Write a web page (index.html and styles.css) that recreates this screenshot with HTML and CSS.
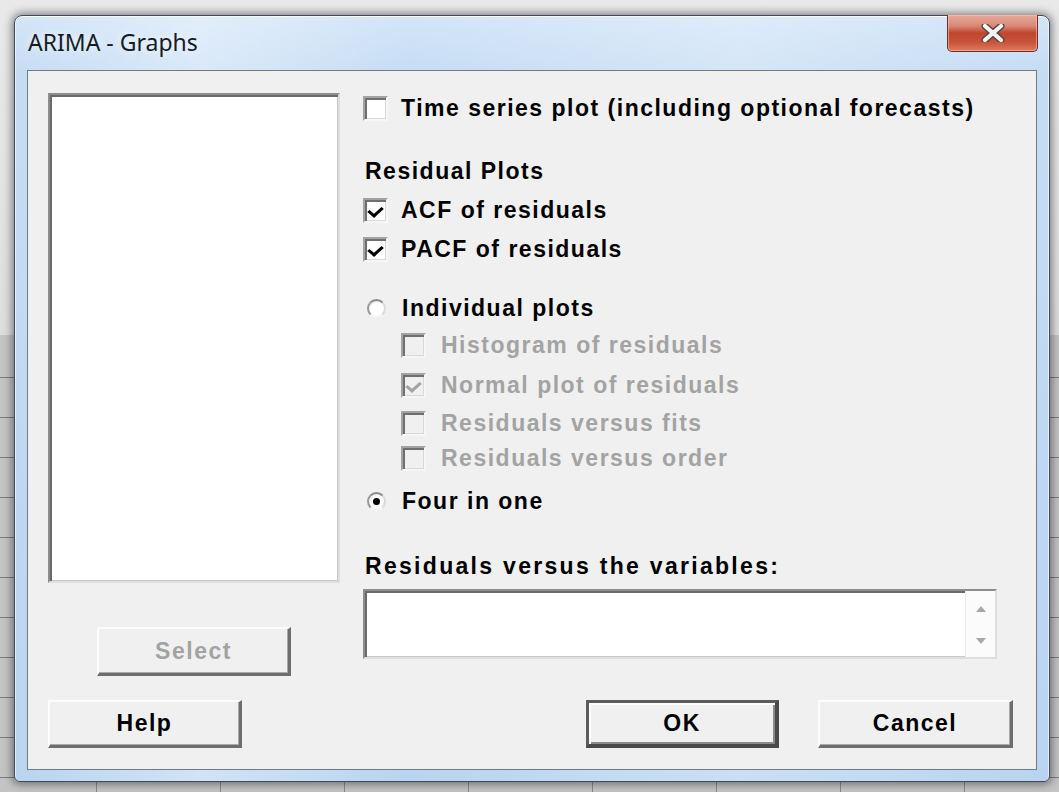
FILE: index.html
```html
<!DOCTYPE html>
<html lang="en">
<head>
<meta charset="utf-8">
<title>ARIMA - Graphs</title>
<link rel="stylesheet" href="styles.css">
</head>
<body>
<div class="desk">
  <div class="window">
    <div class="titlebar">
      <span class="title">ARIMA - Graphs</span>
      <button class="close" aria-label="Close">
        <svg width="24" height="18" viewBox="0 0 24 18">
          <path d="M4 2 L20 16 M20 2 L4 16" stroke="#5a4644" stroke-width="7" stroke-linecap="round" fill="none"/>
          <path d="M4 2 L20 16 M20 2 L4 16" stroke="#f4f4f4" stroke-width="4.2" stroke-linecap="round" fill="none"/>
        </svg>
      </button>
    </div>
    <div class="client">
      <div class="main">
        <div class="left">
          <div class="listbox"></div>
          <button class="btn select" disabled>Select</button>
        </div>
        <div class="right">
          <div class="opt time"><span class="check"></span><span class="label">Time series plot (including optional forecasts)</span></div>
          <div class="heading">Residual Plots</div>
          <div class="opt acf"><span class="check on"></span><span class="label">ACF of residuals</span></div>
          <div class="opt pacf"><span class="check on"></span><span class="label">PACF of residuals</span></div>
          <div class="opt indiv"><span class="radio"></span><span class="label">Individual plots</span></div>
          <div class="opt sub hist"><span class="check off"></span><span class="label dim">Histogram of residuals</span></div>
          <div class="opt sub normal"><span class="check on off"></span><span class="label dim">Normal plot of residuals</span></div>
          <div class="opt sub fits"><span class="check off"></span><span class="label dim">Residuals versus fits</span></div>
          <div class="opt sub order"><span class="check off"></span><span class="label dim">Residuals versus order</span></div>
          <div class="opt four"><span class="radio on"></span><span class="label">Four in one</span></div>
          <div class="heading vars">Residuals versus the variables:</div>
          <div class="textbox">
            <div class="field"></div>
            <div class="scroll">
              <span class="arrow up"></span>
              <span class="arrow down"></span>
            </div>
          </div>
        </div>
      </div>
      <div class="actions">
        <button class="btn help">Help</button>
        <button class="btn ok">OK</button>
        <button class="btn cancel">Cancel</button>
      </div>
    </div>
  </div>
</div>
</body>
</html>
```

FILE: styles.css
```css
* { box-sizing: border-box; }

html, body {
  margin: 0;
  padding: 0;
  width: 1059px;
  height: 792px;
  overflow: hidden;
}

/* desktop behind the dialog: a faded worksheet grid */
.desk {
  width: 1059px;
  height: 792px;
  padding: 15px 0 0 14px;
  background-color: #c4c4c4;
  background-image:
    linear-gradient(#e9e9e9, #dedede),
    repeating-linear-gradient(to bottom, transparent 0 39px, #7c7c7c 39px 40px),
    repeating-linear-gradient(to right, transparent 0 96px, #8c8c8c 96px 97px, transparent 97px 124px);
  background-size: 100% 335px, 100% 100%, 100% 100%;
  background-position: 0 0, 0 338px, 0 0;
  background-repeat: no-repeat, repeat, repeat;
}

.window {
  width: 1036px;
  height: 767px;
  border: 1px solid #3d4b5c;
  border-radius: 8px 8px 6px 6px;
  padding: 0 12px 11px 12px;
  background:
    linear-gradient(to right, rgba(255,255,255,0) 0, rgba(255,255,255,0.35) 18%, rgba(255,255,255,0) 38%, rgba(255,255,255,0.25) 70%, rgba(255,255,255,0) 100%),
    linear-gradient(to bottom, #d3e5f8 0, #c5dcf4 8%, #b9d4f0 100%);
  box-shadow: 0 0 9px 2px rgba(0,0,0,0.45), inset 0 1px 0 rgba(255,255,255,0.8), inset 1px 0 0 rgba(255,255,255,0.6), inset -1px 0 0 rgba(255,255,255,0.6);
  display: flex;
  flex-direction: column;
}

.titlebar {
  height: 54px;
  display: flex;
  align-items: flex-start;
}

.title {
  font-family: "Noto Sans", "Open Sans", sans-serif;
  font-size: 23px;
  line-height: 23px;
  color: #141c28;
  margin: 15px 0 0 1px;
  text-shadow: 0 0 8px rgba(255,255,255,0.9);
}

.close {
  margin: -1px -1px 0 auto;
  width: 91px;
  height: 37px;
  border: 1px solid #6c2e25;
  border-top: none;
  border-radius: 0 0 5px 5px;
  background: linear-gradient(to bottom, #e9a899 0, #d98a77 30%, #c1452d 50%, #c8523a 75%, #de7c5c 100%);
  box-shadow: inset 0 0 0 1px rgba(255,200,190,0.55);
  display: flex;
  align-items: center;
  justify-content: center;
  padding: 0;
}

.client {
  flex: 1;
  border: 1px solid #6e7a87;
  background: #f0f0f0;
  padding: 22px 23px 0 20px;
  font-family: "Liberation Sans", Arial, sans-serif;
  font-weight: bold;
  font-size: 23px;
  letter-spacing: 1.5px;
  color: #000;
}

.main {
  display: flex;
  gap: 23px;
}

.left {
  width: 292px;
  display: flex;
  flex-direction: column;
}

/* sunken 3-D frame shared by the list and the entry field */
.listbox, .textbox {
  background: #fff;
  border: 2px solid;
  border-color: #8d8d8d #dedede #dedede #8d8d8d;
  box-shadow: inset 2px 2px 0 #6a6a6a, inset -1px -1px 0 #c8c8c8;
}

.listbox {
  height: 490px;
}

.btn {
  font-family: "Liberation Sans", Arial, sans-serif;
  font-weight: bold;
  font-size: 23px;
  letter-spacing: 1.5px;
  color: #000;
  background: #f0f0f0;
  height: 48px;
  border-style: solid;
  border-width: 2px 3px 3px 2px;
  border-color: #fcfcfc #6d6d6d #6d6d6d #fcfcfc;
  box-shadow: inset -1px -1px 0 #a9a9a9;
  padding: 0;
}

.select {
  width: 194px;
  height: 49px;
  margin: 44px 0 0 49px;
  color: #a3a3a3;
}

.right {
  width: 634px;
  display: flex;
  flex-direction: column;
}

.opt {
  height: 26px;
  display: flex;
  align-items: center;
  gap: 13px;
}

.heading {
  height: 26px;
  line-height: 26px;
  padding-left: 2px;
}

.time   { margin-top: 2px; }
.heading { margin-top: 37px; }
.acf    { margin-top: 13px; }
.pacf   { margin-top: 13px; }
.indiv  { margin-top: 33px; }
.hist   { margin-top: 11px; }
.normal { margin-top: 14px; }
.fits   { margin-top: 12px; }
.order  { margin-top: 9px; }
.four   { margin-top: 17px; }
.heading.vars { margin-top: 39px; letter-spacing: 2.3px; }

.sub {
  padding-left: 38px;
  gap: 15px;
}

.label.dim { color: #a3a3a3; }

.check {
  width: 25px;
  height: 25px;
  flex: none;
  background: #fff;
  border: 2px solid;
  border-color: #a3a3a3 #f6f6f6 #f6f6f6 #a3a3a3;
  box-shadow: inset 2px 2px 0 #6f6f6f, inset -1px -1px 0 #d9d9d9;
  position: relative;
}

.check.off { background: #f0f0f0; }

.check.on::after {
  content: "";
  position: absolute;
  left: 6px;
  top: 4px;
  width: 6px;
  height: 10px;
  border: solid #000;
  border-width: 0 3px 3px 0;
  transform: rotate(40deg) skewX(-8deg);
}

.check.on.off::after { border-color: #a3a3a3; }

.radio {
  width: 19px;
  height: 19px;
  flex: none;
  margin: 0 3px 0 4px;
  border-radius: 50%;
  background: radial-gradient(circle at 55% 60%, #ffffff 0 55%, #e8e8e8 75%);
  border: 2px solid;
  border-color: #8a8a8a #dadada #f4f4f4 #9a9a9a;
  position: relative;
}

.radio.on::after {
  content: "";
  position: absolute;
  left: 4px;
  top: 4px;
  width: 7px;
  height: 7px;
  border-radius: 50%;
  background: #000;
}

.textbox {
  margin-top: 10px;
  height: 70px;
  display: flex;
}

.field { flex: 1; }

.scroll {
  width: 30px;
  border-left: 1px solid #ececec;
  background: #fbfbfb;
  display: flex;
  flex-direction: column;
  justify-content: space-between;
  align-items: center;
  padding: 15px 0 13px;
}

.arrow {
  width: 0;
  height: 0;
  border-left: 5px solid transparent;
  border-right: 5px solid transparent;
}

.arrow.up { border-bottom: 6px solid #a8a8a8; }
.arrow.down { border-top: 6px solid #a8a8a8; }

.actions {
  margin-top: 24px;
  display: flex;
}

.help { width: 194px; }

.ok {
  width: 193px;
  margin-left: auto;
  border-width: 3px 4px 4px 3px;
  border-color: #5c5c5c #4a4a4a #4a4a4a #5c5c5c;
  box-shadow: inset 2px 2px 0 #fcfcfc, inset -2px -2px 0 #8a8a8a;
}

.cancel {
  width: 195px;
  margin-left: 39px;
}
```
